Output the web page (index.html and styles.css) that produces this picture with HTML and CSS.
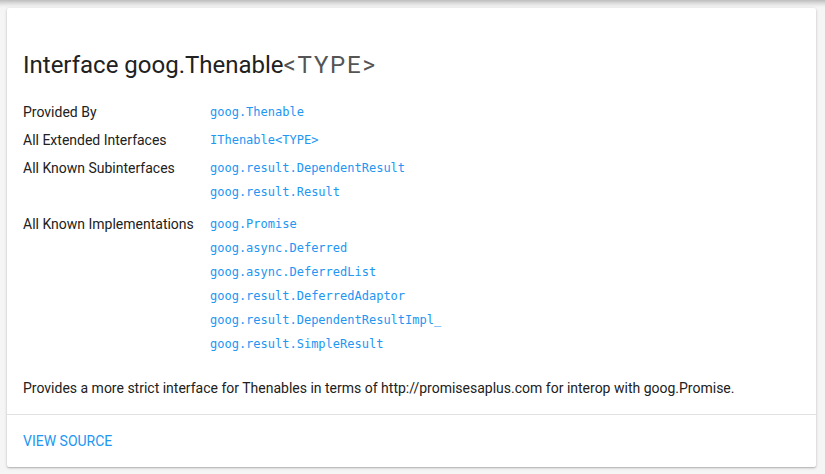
FILE: index.html
```html
<!DOCTYPE html>
<html>
<head>
<meta charset="utf-8">
<link rel="stylesheet" href="styles.css">
</head>
<body>
<div class="topshadow"></div>
<main class="page">
  <section class="card">
    <div class="card-body">
      <h1 class="title">Interface goog.Thenable<span class="tparam">&lt;TYPE&gt;</span></h1>
      <dl class="props">
        <div class="group">
          <dt>Provided By</dt>
          <dd><a class="code">goog.Thenable</a></dd>
        </div>
        <div class="group">
          <dt>All Extended Interfaces</dt>
          <dd><a class="code">IThenable&lt;TYPE&gt;</a></dd>
        </div>
        <div class="group multi">
          <dt>All Known Subinterfaces</dt>
          <dd>
            <a class="code">goog.result.DependentResult</a>
            <a class="code">goog.result.Result</a>
          </dd>
        </div>
        <div class="group">
          <dt>All Known Implementations</dt>
          <dd>
            <a class="code">goog.Promise</a>
            <a class="code">goog.async.Deferred</a>
            <a class="code">goog.async.DeferredList</a>
            <a class="code">goog.result.DeferredAdaptor</a>
            <a class="code">goog.result.DependentResultImpl_</a>
            <a class="code">goog.result.SimpleResult</a>
          </dd>
        </div>
      </dl>
      <p class="desc">Provides a more strict interface for Thenables in terms of http://promisesaplus.com for interop with goog.Promise.</p>
    </div>
    <div class="card-actions">
      <a class="action">VIEW SOURCE</a>
    </div>
  </section>
</main>
</body>
</html>
```
FILE: styles.css
```css
html, body {
  margin: 0;
  padding: 0;
}
body {
  background: #f5f5f5;
  font-family: Roboto, "Noto Sans", Arial, sans-serif;
  color: #212121;
  height: 474px;
  overflow: hidden;
}
.topshadow {
  height: 8px;
  background: linear-gradient(to bottom, #bdbdbd 0px, #d9d9d9 3px, #efefef 6px, #f5f5f5 8px);
}
.page {
  padding: 0 9px 0 7px;
}
.card {
  background: #fff;
  border-radius: 2px;
  box-shadow: 0 1px 3px rgba(0,0,0,0.22), 0 1px 1px rgba(0,0,0,0.10);
}
.card-body {
  padding: 41px 16px 16px 16px;
}
.title {
  margin: 0 0 17px 0;
  font-size: 24px;
  line-height: 32px;
  font-weight: 400;
  color: #212121;
}
.tparam {
  font-weight: 400;
  color: #555;
  letter-spacing: 1.8px;
}
.props {
  margin: 0;
}
.group {
  display: grid;
  grid-template-columns: 187px 1fr;
  padding: 2px 0;
}
.group.multi {
  padding-bottom: 6px;
}
dt {
  font-size: 14px;
  line-height: 24px;
}
dd {
  margin: 0;
  display: flex;
  flex-direction: column;
}
.code {
  font-family: "DejaVu Sans Mono", "Liberation Mono", monospace;
  font-size: 12px;
  line-height: 24px;
  color: #2196f3;
  text-decoration: none;
}
.desc {
  margin: 20px 0 0 0;
  font-size: 14px;
  line-height: 20px;
}
.card-actions {
  border-top: 1px solid #e0e0e0;
  padding: 16px 16px 16px 16px;
  height: 20px;
}
.action {
  font-size: 14px;
  line-height: 20px;
  color: #2196f3;
  text-decoration: none;
}
```
